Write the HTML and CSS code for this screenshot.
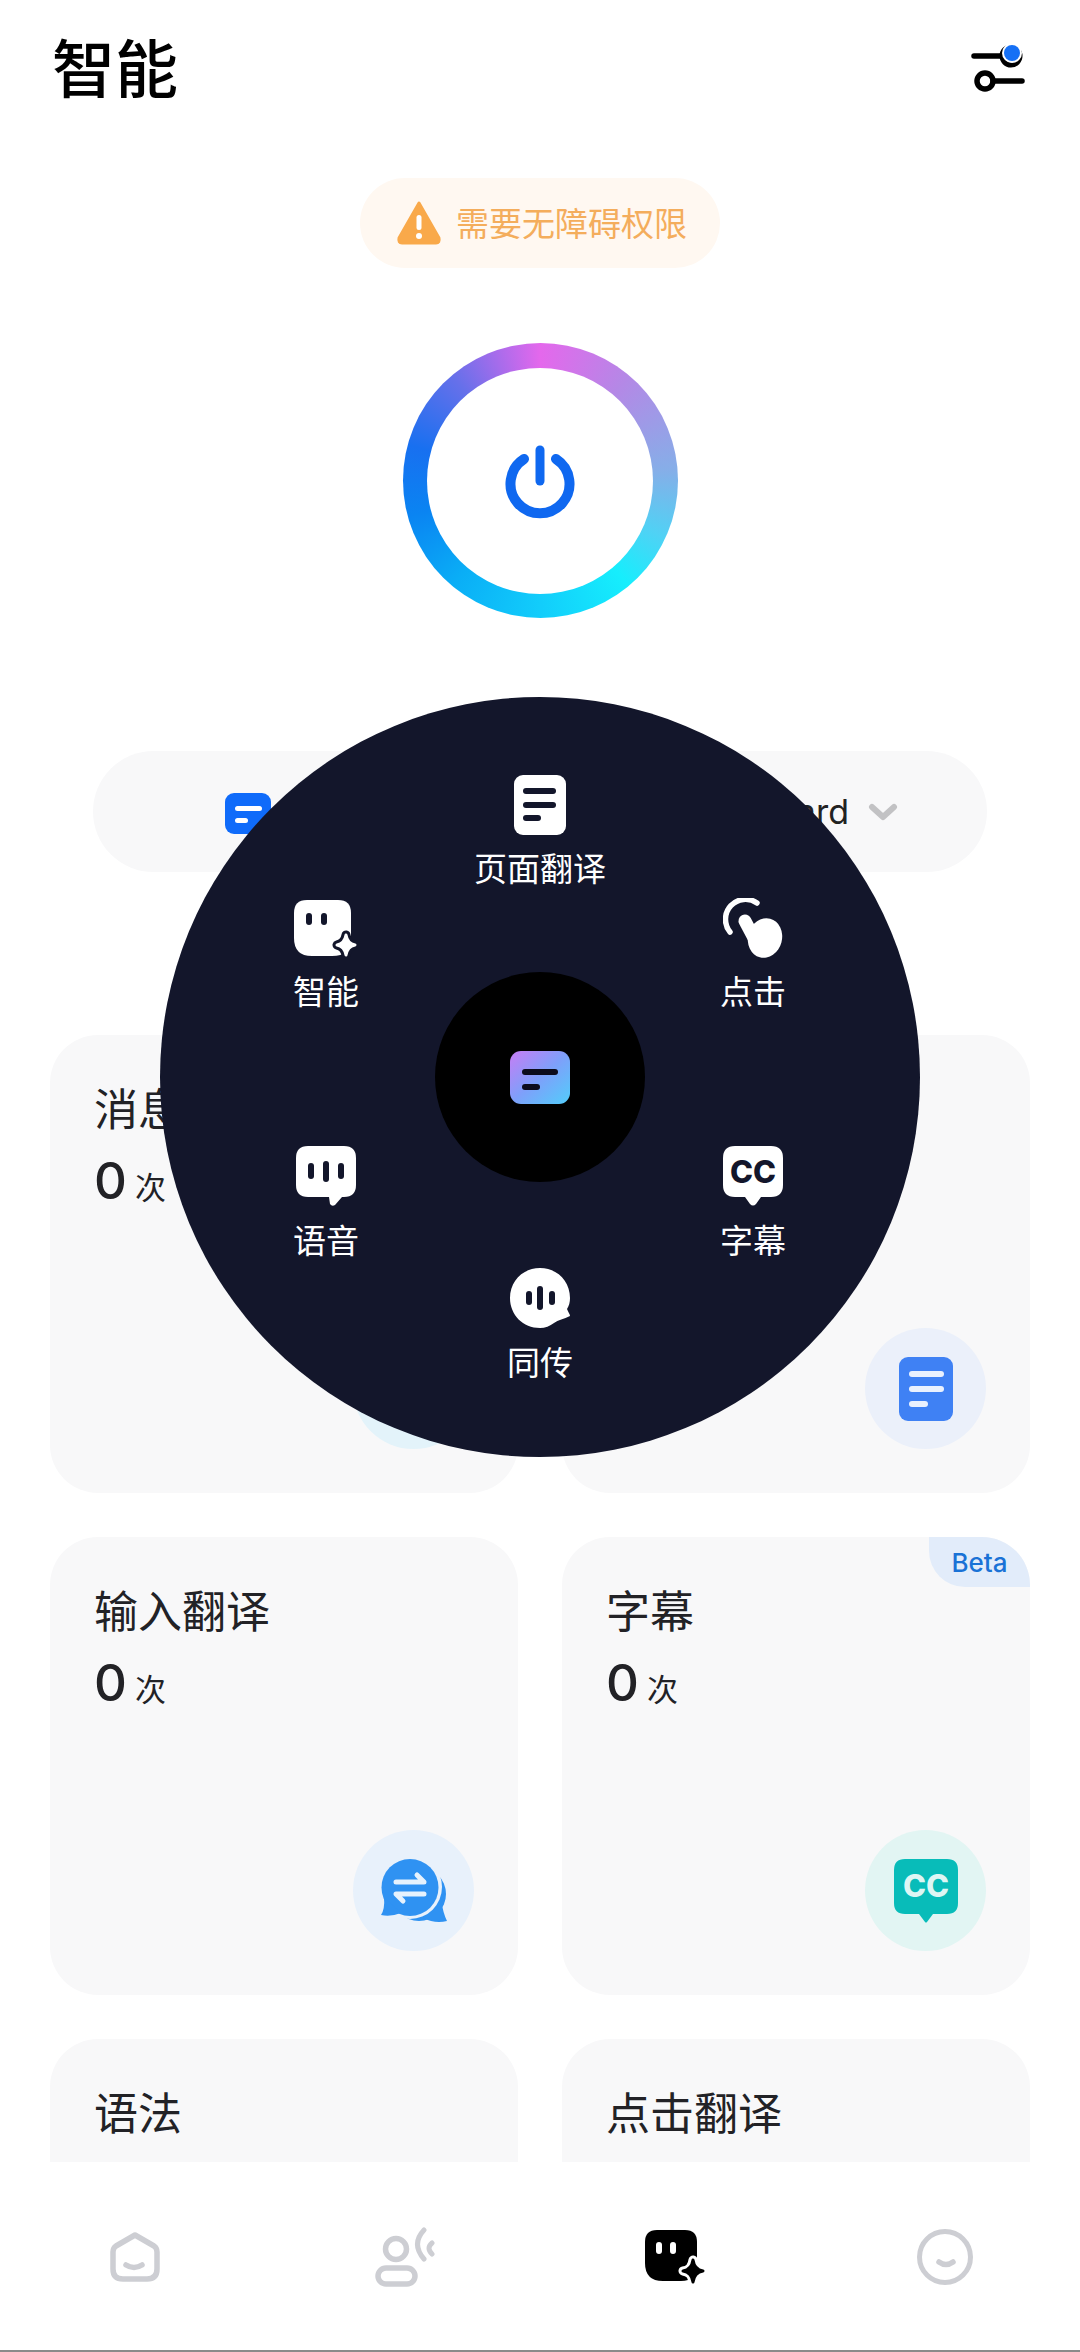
FILE: index.html
```html
<!DOCTYPE html>
<html lang="zh-CN">
<head>
    <meta charset="UTF-8">
    <meta name="viewport" content="width=device-width, initial-scale=1.0">
    <title>智能</title>
    <link rel="stylesheet" href="styles.css">
</head>
<body>
<div class="page">

    <header class="topo">
        <h1>智能</h1>
        <svg class="ajustes" width="54" height="48" viewBox="0 0 54 48">
            <path d="M3 11H32" stroke="#000" stroke-width="5.500" stroke-linecap="round"/>
            <circle cx="40" cy="11" r="9" fill="none" stroke="#000" stroke-width="5"/>
            <circle cx="41" cy="8" r="10" fill="#fff"/>
            <circle cx="41" cy="8" r="8" fill="#1570f5"/>
            <circle cx="14" cy="36" r="8" fill="none" stroke="#000" stroke-width="5.500"/>
            <path d="M22 36H51" stroke="#000" stroke-width="5.500" stroke-linecap="round"/>
        </svg>
    </header>

    <div class="aviso-linha">
        <div class="aviso">
            <svg width="46" height="46" viewBox="0 0 46 46">
                <path d="M23 3L43 38Q44 43 40 43H6Q2 43 3 38Z" fill="#f9a94a" stroke="#f9a94a" stroke-width="3" stroke-linejoin="round"/>
                <rect x="20.500" y="15" width="5" height="15" rx="2.500" fill="#fff"/>
                <circle cx="23" cy="36" r="3" fill="#fff"/>
            </svg>
            <span>需要无障碍权限</span>
        </div>
    </div>

    <div class="anel-linha">
        <div class="anel">
            <div class="anel-miolo">
                <svg width="70" height="76" viewBox="0 0 70 76">
                    <path d="M19 14A29.500 29.500 0 1 0 51 14" fill="none" stroke="#0f68f0" stroke-width="10" stroke-linecap="round"/>
                    <path d="M35 5V36" stroke="#0f68f0" stroke-width="9" stroke-linecap="round"/>
                </svg>
            </div>
        </div>
    </div>

    <div class="seletor">
        <div class="seletor-lado seletor-esq">
            <svg width="46" height="41" viewBox="0 0 46 41">
                <rect width="46" height="41" rx="9" fill="#0f6bfa"/>
                <rect x="10" y="13" width="27" height="5" rx="2.500" fill="#fff"/>
                <rect x="10" y="25" width="13" height="5" rx="2.500" fill="#fff"/>
            </svg>
            <span>页面翻译</span>
        </div>
        <div class="seletor-lado seletor-dir">
            <span>Standard</span>
            <svg width="30" height="18" viewBox="0 0 30 18">
                <path d="M4 4L15 14L26 4" fill="none" stroke="#c2c2c4" stroke-width="6" stroke-linecap="round" stroke-linejoin="round"/>
            </svg>
        </div>
    </div>

    <section class="cards">
        <div class="card">
            <h3>消息翻译</h3>
            <p class="conta"><b>0</b> 次</p>
            <div class="bola bola-ciano"></div>
        </div>
        <div class="card">
            <h3>页面翻译</h3>
            <p class="conta"><b>0</b> 次</p>
            <div class="bola bola-azul">
                <svg width="54" height="64" viewBox="0 0 54 64">
                    <rect width="54" height="64" rx="9" fill="#3f81f4"/>
                    <rect x="10" y="14" width="35" height="6" rx="3" fill="#e9f1fe"/>
                    <rect x="10" y="29" width="35" height="6" rx="3" fill="#e9f1fe"/>
                    <rect x="10" y="44" width="19" height="6" rx="3" fill="#e9f1fe"/>
                </svg>
            </div>
        </div>
        <div class="card">
            <h3>输入翻译</h3>
            <p class="conta"><b>0</b> 次</p>
            <div class="bola bola-celeste">
                <svg width="66" height="64" viewBox="0 0 66 64">
                    <circle cx="38" cy="35" r="27" fill="#2f92f2"/>
                    <path d="M60 40Q62 54 66 62Q54 65 42 59Z" fill="#2f92f2"/>
                    <circle cx="29" cy="28" r="32" fill="#e8f1fb"/>
                    <circle cx="29" cy="28.500" r="28.500" fill="#2f92f2"/>
                    <path d="M3 38Q4 50 0 56Q10 58 20 54Z" fill="#2f92f2"/>
                    <path d="M15 23H43L36 16" fill="none" stroke="#e6f2fd" stroke-width="5" stroke-linecap="round" stroke-linejoin="round"/>
                    <path d="M43 35H15L22 42" fill="none" stroke="#e6f2fd" stroke-width="5" stroke-linecap="round" stroke-linejoin="round"/>
                </svg>
            </div>
        </div>
        <div class="card">
            <span class="beta">Beta</span>
            <h3>字幕</h3>
            <p class="conta"><b>0</b> 次</p>
            <div class="bola bola-verde">
                <svg width="64" height="64" viewBox="0 0 64 64">
                    <path d="M11 0H53Q64 0 64 11V44Q64 55 53 55H39L33 63Q32 64 31 63L25 55H11Q0 55 0 44V11Q0 0 11 0Z" fill="#08bcb9"/>
                    <text x="32" y="38" class="cc-letra" fill="#def6f4">CC</text>
                </svg>
            </div>
        </div>
        <div class="card">
            <h3>语法</h3>
        </div>
        <div class="card">
            <h3>点击翻译</h3>
        </div>
    </section>

    <!-- barra de baixo -->
    <nav class="abas">
        <div class="aba">
            <svg width="50" height="50" viewBox="0 0 50 50">
                <path d="M25 3L44 14Q47 16 47 20V37Q47 47 37 47H13Q3 47 3 37V20Q3 16 6 14Z" fill="none" stroke="#cdced3" stroke-width="5.500" stroke-linejoin="round"/>
                <path d="M16 33Q24 38 32 33" fill="none" stroke="#cdced3" stroke-width="5.500" stroke-linecap="round"/>
            </svg>
        </div>
        <div class="aba">
            <svg width="60" height="60" viewBox="0 0 60 60">
                <circle cx="21" cy="22" r="10.500" fill="none" stroke="#cdced3" stroke-width="5.500"/>
                <rect x="3" y="41" width="37" height="16" rx="8" fill="none" stroke="#cdced3" stroke-width="5.500"/>
                <path d="M49 3Q36 17 49 32" fill="none" stroke="#cdced3" stroke-width="5" stroke-linecap="round"/>
                <path d="M57 16Q51 21 57 27" fill="none" stroke="#cdced3" stroke-width="5" stroke-linecap="round"/>
            </svg>
        </div>
        <div class="aba">
            <svg width="60" height="54" viewBox="0 0 60 54">
                <path d="M12 0H40Q52 0 52 12V36Q52 51 36 51H18Q0 51 0 33V12Q0 0 12 0Z" fill="#000"/>
                <rect x="11" y="12" width="6" height="12" rx="3" fill="#fff"/>
                <rect x="25" y="12" width="6" height="12" rx="3" fill="#fff"/>
                <path d="M48 30C49 37 52 40 58 41C52 42 49 45 48 52C47 45 44 42 38 41C44 40 47 37 48 30Z" fill="#fff" stroke="#fff" stroke-width="9" stroke-linejoin="round"/>
                <path d="M48 30C49 37 52 40 58 41C52 42 49 45 48 52C47 45 44 42 38 41C44 40 47 37 48 30Z" fill="#000" stroke="#000" stroke-width="3" stroke-linejoin="round"/>
            </svg>
        </div>
        <div class="aba">
            <svg width="56" height="56" viewBox="0 0 56 56">
                <circle cx="28" cy="28" r="25.500" fill="none" stroke="#cdced3" stroke-width="5"/>
                <path d="M22 33Q29 38 36 33" fill="none" stroke="#cdced3" stroke-width="5.500" stroke-linecap="round"/>
            </svg>
        </div>
    </nav>

    <!-- menu redondo por cima da pagina -->
    <div class="roda">
        <div class="roda-centro">
            <svg width="60" height="53" viewBox="0 0 60 53">
                <defs>
                    <linearGradient id="gradCentro" x1="0" y1="0" x2="1" y2="1">
                        <stop offset="0" stop-color="#c77df5"/>
                        <stop offset="0.500" stop-color="#7ea0fa"/>
                        <stop offset="1" stop-color="#52cdfb"/>
                    </linearGradient>
                </defs>
                <rect width="60" height="53" rx="11" fill="url(#gradCentro)"/>
                <rect x="12" y="18" width="36" height="6" rx="3" fill="#0c0c1c"/>
                <rect x="12" y="33" width="18" height="6" rx="3" fill="#0c0c1c"/>
            </svg>
        </div>

        <div class="item item-topo">
            <svg width="52" height="60" viewBox="0 0 52 60">
                <rect width="52" height="60" rx="9" fill="#fff"/>
                <rect x="9" y="13" width="33" height="6" rx="3" fill="#13162b"/>
                <rect x="9" y="27" width="33" height="6" rx="3" fill="#13162b"/>
                <rect x="9" y="40" width="18" height="6" rx="3" fill="#13162b"/>
            </svg>
            <span>页面翻译</span>
        </div>

        <div class="item item-esq1">
            <svg width="64" height="57" viewBox="0 0 64 57">
                <path d="M13 0H44Q57 0 57 13V38Q57 56 38 56H18Q0 56 0 38V13Q0 0 13 0Z" fill="#fff"/>
                <rect x="12" y="13" width="6" height="12" rx="3" fill="#13162b"/>
                <rect x="27" y="13" width="6" height="12" rx="3" fill="#13162b"/>
                <path d="M52 35C53 41 56 44 61 45C56 46 53 49 52 55C51 49 48 46 43 45C48 44 51 41 52 35Z" fill="#13162b" stroke="#13162b" stroke-width="9" stroke-linejoin="round"/>
                <path d="M52 35C53 41 56 44 61 45C56 46 53 49 52 55C51 49 48 46 43 45C48 44 51 41 52 35Z" fill="#fff" stroke="#fff" stroke-width="3" stroke-linejoin="round"/>
            </svg>
            <span>智能</span>
        </div>

        <div class="item item-dir1">
            <svg width="60" height="61" viewBox="0 0 60 61">
                <path d="M34 5A20 20 0 0 0 7 34" fill="none" stroke="#fff" stroke-width="5.500" stroke-linecap="round"/>
                <path d="M22 23L31 40" fill="none" stroke="#fff" stroke-width="13" stroke-linecap="round"/>
                <ellipse cx="42" cy="40" rx="17" ry="20" transform="rotate(15 42 40)" fill="#fff"/>
            </svg>
            <span>点击</span>
        </div>

        <div class="item item-esq2">
            <svg width="60" height="60" viewBox="0 0 60 60">
                <path d="M12 0H48Q60 0 60 12V39Q60 51 48 51H46L39 59Q36 61 34 58L33 51H12Q0 51 0 39V12Q0 0 12 0Z" fill="#fff"/>
                <rect x="12" y="17" width="6" height="16" rx="3" fill="#13162b"/>
                <rect x="27" y="15" width="6" height="21" rx="3" fill="#13162b"/>
                <rect x="42" y="17" width="6" height="16" rx="3" fill="#13162b"/>
            </svg>
            <span>语音</span>
        </div>

        <div class="item item-dir2">
            <svg width="60" height="60" viewBox="0 0 60 60">
                <path d="M12 0H48Q60 0 60 12V39Q60 51 48 51H38L33 58Q30 61 27 58L22 51H12Q0 51 0 39V12Q0 0 12 0Z" fill="#fff"/>
                <text x="30" y="37" class="cc-letra" fill="#13162b">CC</text>
            </svg>
            <span>字幕</span>
        </div>

        <div class="item item-baixo">
            <svg width="60" height="60" viewBox="0 0 60 60">
                <path d="M30 0C47 0 60 13 60 30C60 34 59 38 57 41C58 44 60 46 60 48C54 51 48 52 44 55C40 58 35 60 30 60C13 60 0 47 0 30C0 13 13 0 30 0Z" fill="#fff"/>
                <rect x="16" y="23" width="6" height="14" rx="3" fill="#13162b"/>
                <rect x="27" y="18" width="6" height="24" rx="3" fill="#13162b"/>
                <rect x="39" y="23" width="6" height="14" rx="3" fill="#13162b"/>
            </svg>
            <span>同传</span>
        </div>
    </div>

</div>
</body>
</html>
```

FILE: styles.css
```css
* {
    margin: 0;
    padding: 0;
    box-sizing: border-box;
    font-family: "Noto Sans CJK SC", "Noto Sans", sans-serif;
}

:root {
    --card-bg: #f8f8f9;
    --roda-bg: #13162b;
    --texto: #222226;
}

html, body {
    width: 1080px;
    height: 2352px;
    overflow: hidden;
    background: #fff;
}

svg {
    display: block;
}

.page {
    position: relative;
    width: 1080px;
    height: 2352px;
    overflow: hidden;
}

.topo {
    display: flex;
    justify-content: space-between;
    align-items: flex-start;
    padding: 22px 55px 0 52px;
    height: 178px;
}

.topo h1 {
    font-size: 63px;
    line-height: 86px;
    font-weight: 500;
    color: #000;
}

.ajustes {
    margin-top: 23px;
}

.aviso-linha {
    display: flex;
    justify-content: center;
}

.aviso {
    display: flex;
    align-items: center;
    gap: 14px;
    height: 90px;
    width: 360px;
    padding-left: 36px;
    border-radius: 45px;
    background: #fff8f1;
    color: #f4ad5c;
    font-size: 33px;
}

.aviso span {
    margin-top: -3px;
}

.anel-linha {
    display: flex;
    justify-content: center;
    padding-top: 75px;
}

.anel {
    display: flex;
    align-items: center;
    justify-content: center;
    width: 275px;
    height: 275px;
    border-radius: 50%;
    background: conic-gradient(#e468ec 0deg, #b488e6 40deg, #86aee8 85deg, #4fd2f5 115deg, #16eefd 140deg, #12cdfb 180deg, #0aaef6 220deg, #0a84f2 255deg, #1870f0 285deg, #6670ea 320deg, #e468ec 360deg);
}

.anel-miolo {
    display: flex;
    align-items: center;
    justify-content: center;
    width: 226px;
    height: 226px;
    padding-top: 5px;
    border-radius: 50%;
    background: #fff;
}

.seletor {
    display: flex;
    height: 121px;
    margin: 133px 93px 0;
    border-radius: 61px;
    background: var(--card-bg);
}

.seletor-lado {
    flex: 1;
    display: flex;
    align-items: center;
    font-size: 34px;
    color: #222;
}

.seletor-esq {
    gap: 14px;
    padding-left: 132px;
    padding-top: 3px;
}

.seletor-dir {
    justify-content: flex-end;
    gap: 19px;
    padding-right: 89px;
}

.seletor-dir span {
    font-family: "Inter", sans-serif;
}

.cards {
    display: grid;
    grid-template-columns: 468px 468px;
    grid-auto-rows: 458px;
    gap: 44px;
    margin: 163px 50px 0;
}

.card {
    position: relative;
    padding: 42px 44px;
    border-radius: 48px;
    background: var(--card-bg);
    overflow: hidden;
}

.card h3 {
    font-size: 44px;
    line-height: 60px;
    font-weight: 400;
    color: var(--texto);
}

.conta {
    display: flex;
    align-items: baseline;
    gap: 8px;
    margin-top: 13px;
    font-size: 31px;
    color: var(--texto);
}

.conta b {
    font-family: "Inter", sans-serif;
    font-size: 51px;
    font-weight: 500;
}

.bola {
    position: absolute;
    right: 44px;
    bottom: 44px;
    display: flex;
    align-items: center;
    justify-content: center;
    width: 121px;
    height: 121px;
    border-radius: 50%;
}

.bola-ciano { background: #e3f3fa; }
.bola-azul { background: #ebf0fa; }
.bola-celeste { background: #e8f1fb; }
.bola-verde { background: #e2f5f3; }

.beta {
    position: absolute;
    top: 0;
    right: 0;
    display: flex;
    align-items: center;
    justify-content: center;
    width: 101px;
    height: 50px;
    border-bottom-left-radius: 36px;
    background: #e2ecfa;
    color: #1a72d6;
    font-family: "Inter", sans-serif;
    font-size: 26px;
    font-weight: 500;
}

.cc-letra {
    font-family: "Inter", sans-serif;
    font-size: 31px;
    font-weight: 800;
    text-anchor: middle;
}

/* barra de baixo */
.abas {
    position: absolute;
    left: 0;
    right: 0;
    bottom: 0;
    display: flex;
    height: 190px;
    padding-top: 2px;
    background: #fff;
    border-bottom: 2px solid #8a8a8a;
}

.aba {
    flex: 1;
    display: flex;
    align-items: center;
    justify-content: center;
}

/* menu redondo */
.roda {
    position: absolute;
    left: 160px;
    top: 697px;
    width: 760px;
    height: 760px;
    border-radius: 50%;
    background: var(--roda-bg);
}

.roda-centro {
    position: absolute;
    left: 275px;
    top: 275px;
    display: flex;
    align-items: center;
    justify-content: center;
    width: 210px;
    height: 210px;
    border-radius: 50%;
    background: #000;
}

.item {
    position: absolute;
    display: flex;
    flex-direction: column;
    align-items: center;
    width: 140px;
    color: #fff;
    font-size: 33px;
    line-height: 44px;
}

.item span {
    margin-top: 11px;
}

.item-topo span {
    margin-top: 10px;
}

.item-dir1 span {
    margin-top: 9px;
}

.item-topo { left: 310px; top: 78px; }
.item-esq1 { left: 96px; top: 203px; }
.item-dir1 { left: 523px; top: 201px; }
.item-esq2 { left: 96px; top: 449px; }
.item-dir2 { left: 523px; top: 449px; }
.item-baixo { left: 310px; top: 571px; }
```
